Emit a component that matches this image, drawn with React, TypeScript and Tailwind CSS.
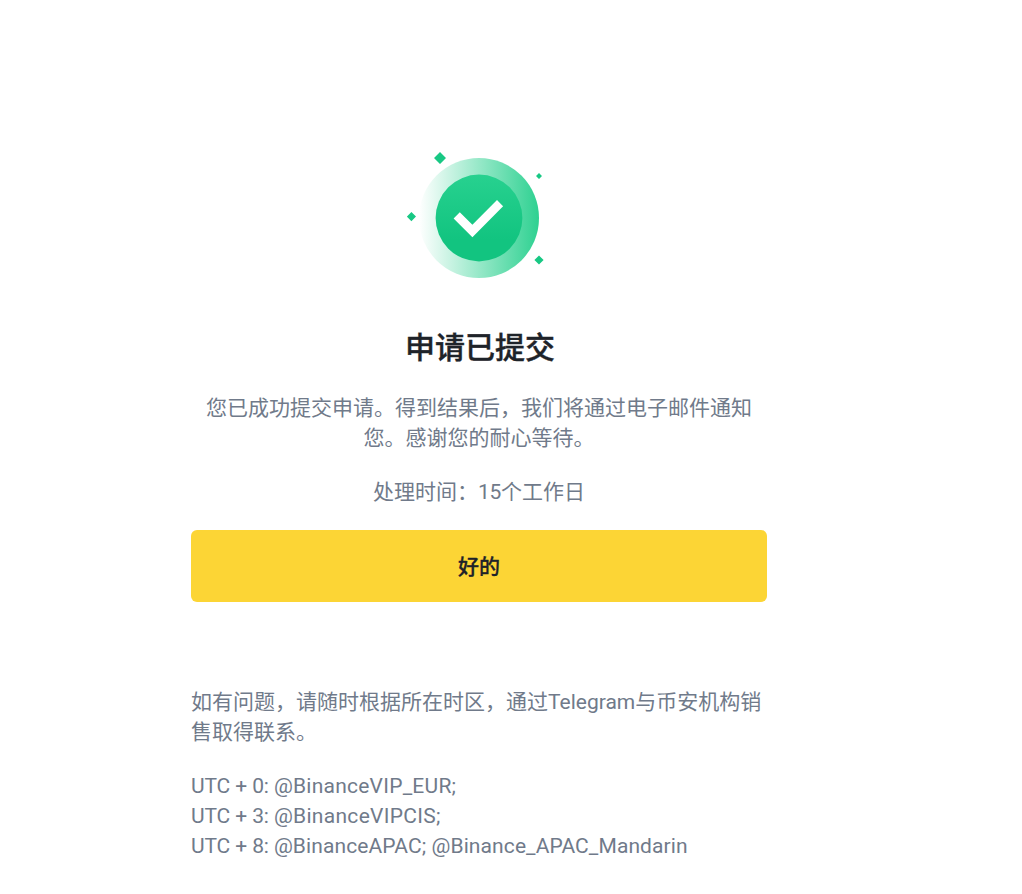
const contacts = [
  { zone: "UTC + 0:", handles: "@BinanceVIP_EUR;", spacing: "tracking-[0.24px]" },
  { zone: "UTC + 3:", handles: "@BinanceVIPCIS;", spacing: "tracking-[0.3px]" },
  { zone: "UTC + 8:", handles: "@BinanceAPAC; @Binance_APAC_Mandarin", spacing: "tracking-[0.1px]" },
];

function SuccessIcon() {
  return (
    <svg className="mx-auto block size-36" viewBox="0 0 144 144" fill="none" aria-hidden="true">
      <defs>
        <linearGradient id="ring" x1="12" y1="72" x2="132" y2="72" gradientUnits="userSpaceOnUse">
          <stop stopColor="#2ed191" stopOpacity="0" />
          <stop offset="1" stopColor="#2ed191" />
        </linearGradient>
        <linearGradient id="disc" x1="72" y1="29" x2="72" y2="115" gradientUnits="userSpaceOnUse">
          <stop stopColor="#27d18f" />
          <stop offset="0.75" stopColor="#12c480" />
          <stop offset="1" stopColor="#12c480" />
        </linearGradient>
      </defs>
      <circle cx="72" cy="72" r="60" fill="url(#ring)" />
      <circle cx="72" cy="72" r="43.4" fill="url(#disc)" />
      <path d="M46.6 72.5l6.2-6.2 12.6 12.5L90 54.1l6.1 6.1-30.7 31.1z" fill="#fff" />
      <path
        d="M33 6l6 6-6 6-6-6zM132 27l3 3-3 3-3-3zM4.4 66l4.6 4.6-4.6 4.6-4.6-4.6zM132 109.4l4.6 4.6-4.6 4.6-4.6-4.6z"
        fill="#18c884"
      />
    </svg>
  );
}

export default function App() {
  return (
    <div className="min-h-screen bg-white font-[Roboto,'Noto_Sans_CJK_SC',sans-serif]" lang="zh-CN">
      <main className="ml-[191px] w-[576px] pt-[146px] text-[21px] leading-[30px] text-[#707a8a]">
        <SuccessIcon />
        <section className="pt-10 text-center">
          <h1 className="pl-0.5 text-[30px] leading-9 font-medium text-[#1e2329] [-webkit-text-stroke:0.4px]">
            申请已提交
          </h1>
          <p className="mt-[27px]">
            您已成功提交申请。得到结果后，我们将通过电子邮件通知
            <br />
            您。感谢您的耐心等待。
          </p>
          <p className="mt-6">
            处理时间：<span className="tracking-[-0.3px]">15</span>个工作日
          </p>
        </section>
        <button className="mt-[23px] h-[72px] w-full rounded-md bg-[#fcd535] pt-0.5 font-medium text-[#1e2329] [-webkit-text-stroke:0.3px]">
          好的
        </button>
        <section className="pt-[85px]">
          <p className="whitespace-nowrap">
            如有问题，请随时根据所在时区，通过Telegram与币安机构销
            <br />
            售取得联系。
          </p>
          <ul className="mt-6">
            {contacts.map((c) => (
              <li key={c.zone} className="whitespace-nowrap">
                <span className="tracking-[-0.12px]">{c.zone} </span>
                <span className={c.spacing}>{c.handles}</span>
              </li>
            ))}
          </ul>
        </section>
      </main>
    </div>
  );
}
